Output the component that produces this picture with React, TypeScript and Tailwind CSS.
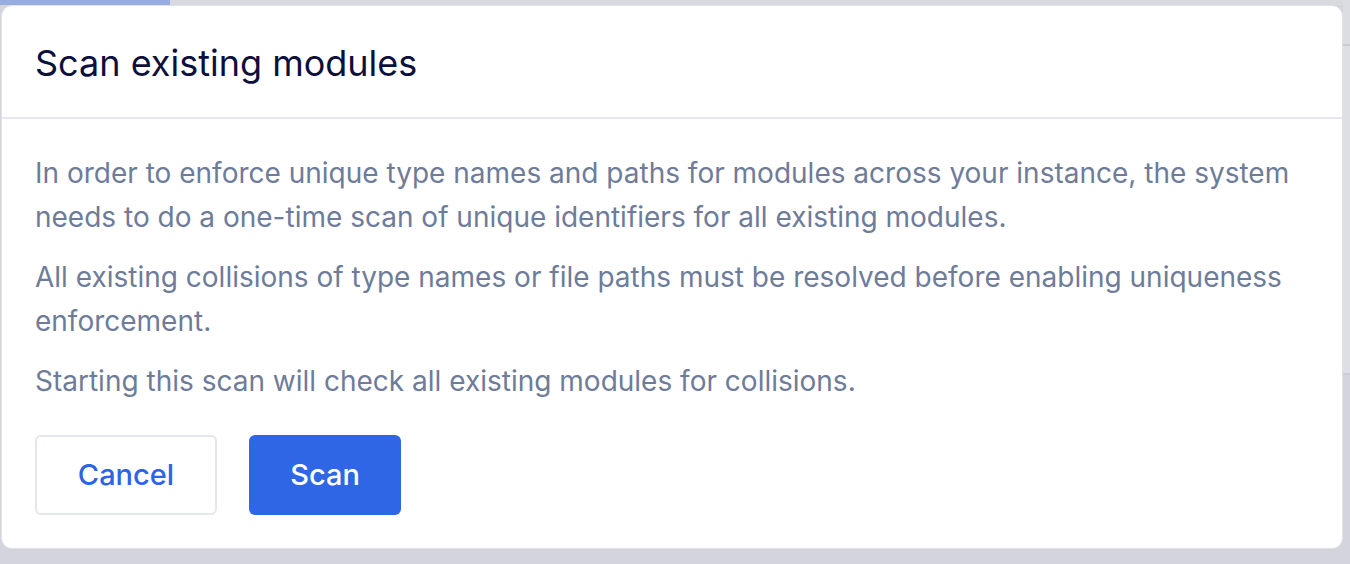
import React from "react";

export default function App() {
  return (
    <div
      className="flex h-[564px] w-[1350px] overflow-hidden bg-[#d4d4dc]"
      style={{ fontFamily: "Inter, 'Noto Sans', sans-serif" }}
    >
      <div className="flex w-[1343px] flex-col">
        <div className="flex h-[5px] shrink-0">
          <div className="w-[170px] bg-[#98addf]" />
          <div className="flex-1 bg-[#d9dae0]" />
        </div>
        <div className="ml-[1px] mt-[0px] w-[1342px] rounded-[11px] border border-[#e0e2e8] bg-white">
          <div className="flex h-[113px] items-center border-b-2 border-[#e6e8ed] px-[33px] pt-[3px]">
            <h1 className="text-[36px] font-normal leading-none text-[#0d0f3c]">
              Scan existing modules
            </h1>
          </div>
          <div className="px-[33px] pb-[33px] pt-[32px]">
            <div className="flex flex-col gap-[16px] text-[28px] leading-[44px] text-[#6e7c99]">
              <p>
                In order to enforce unique type names and paths for modules across your instance, the system
                needs to do a one-time scan of unique identifiers for all existing modules.
              </p>
              <p>
                All existing collisions of type names or file paths must be resolved before enabling uniqueness
                enforcement.
              </p>
              <p>Starting this scan will check all existing modules for collisions.</p>
            </div>
            <div className="mt-[32px] flex gap-[32px]">
              <button className="h-[80px] w-[182px] rounded-[6px] border-2 border-[#e4e7ec] bg-white text-[29px] font-medium text-[#2d63e6]">
                Cancel
              </button>
              <button className="h-[80px] w-[152px] rounded-[6px] bg-[#2f66e6] text-[29px] font-medium text-white">
                Scan
              </button>
            </div>
          </div>
        </div>
      </div>
      <div className="flex flex-1 flex-col">
        <div className="h-[44px] bg-[#dcdde2]" />
        <div className="h-[2px] bg-[#c9cad2]" />
        <div className="h-[327px] bg-[#dedfe4]" />
        <div className="h-[2px] bg-[#cbccd4]" />
        <div className="flex-1 bg-[#d4d4dc]" />
      </div>
    </div>
  );
}
